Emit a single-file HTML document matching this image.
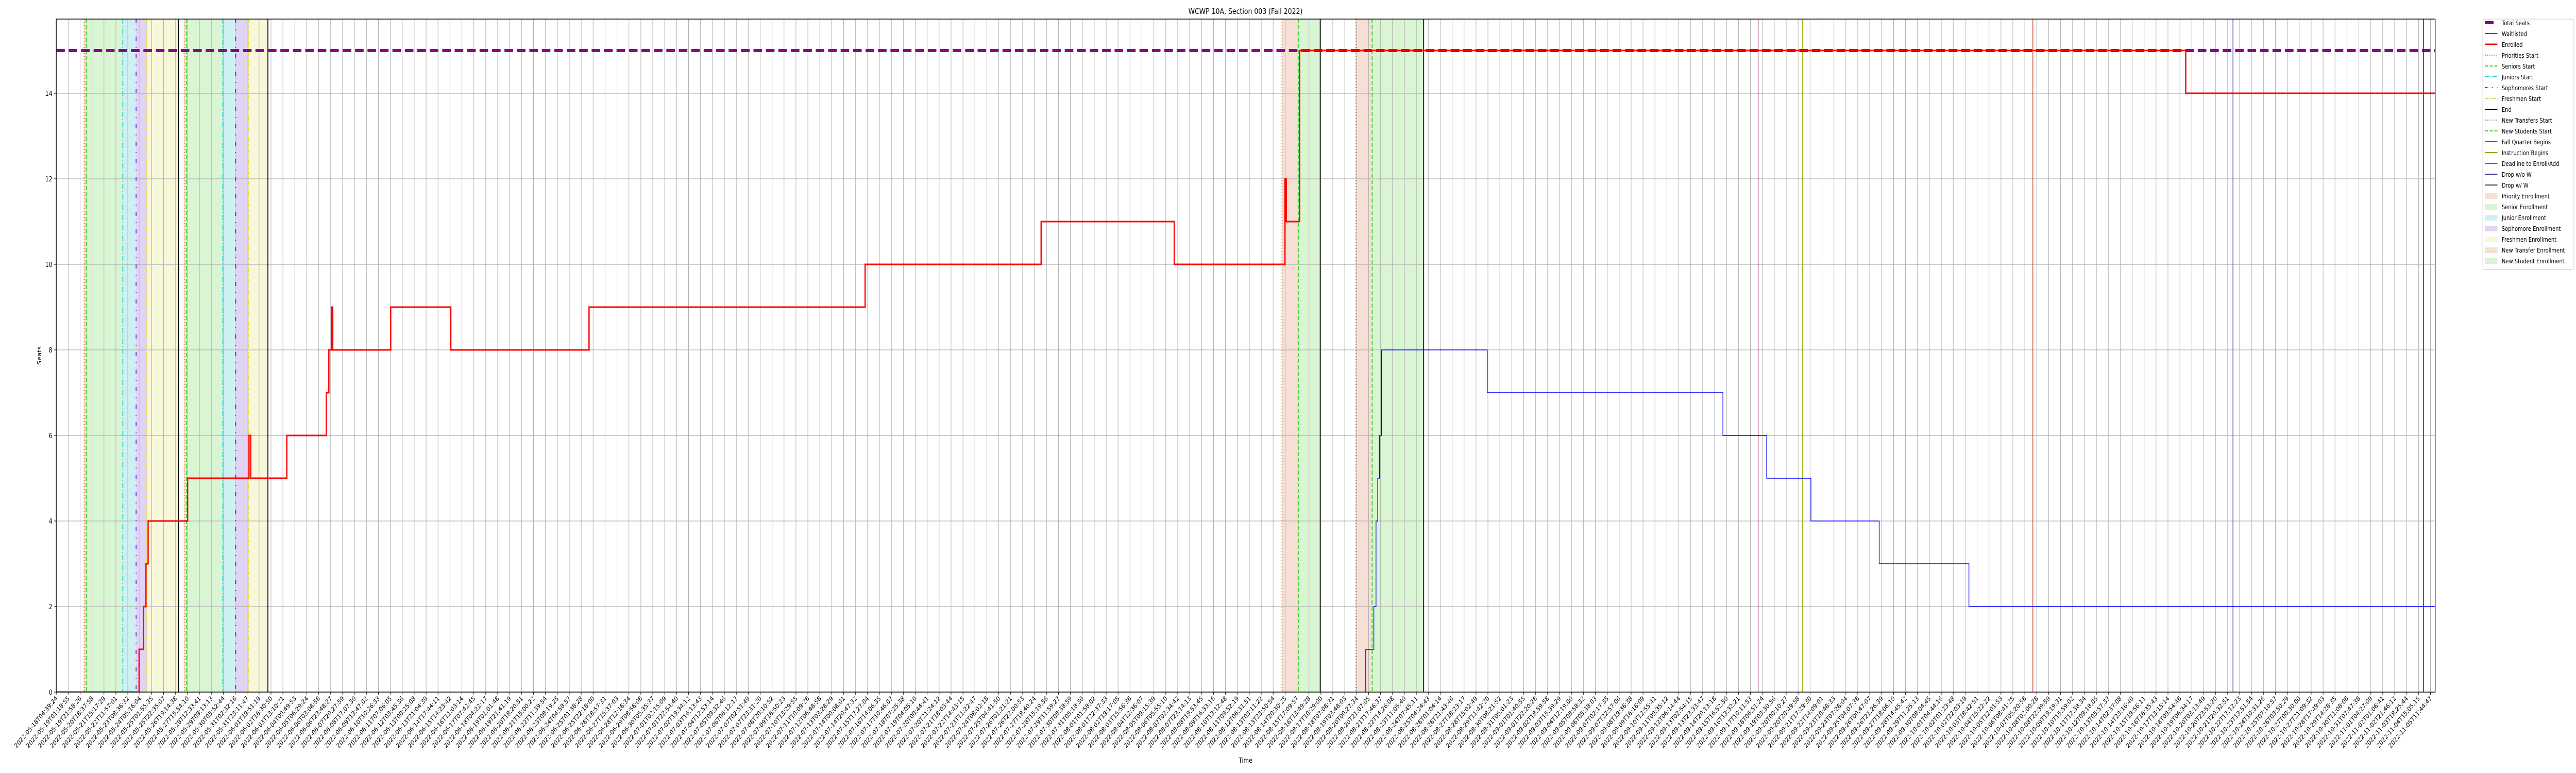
<!DOCTYPE html>
<html><head><meta charset="utf-8"><style>
html,body{margin:0;padding:0;background:#fff;width:100%;height:100%;overflow:hidden;}
svg{display:block;font-family:"DejaVu Sans","Liberation Sans",sans-serif;width:100vw;height:100vh;}
</style></head><body>
<svg id="s" viewBox="0 0 6000 1500" preserveAspectRatio="none" xmlns="http://www.w3.org/2000/svg">
<rect width="6000" height="1500" fill="#fff"/>
<defs><clipPath id="c"><rect x="131" y="37" width="5541" height="1306"/></clipPath></defs>
<g clip-path="url(#c)">
<rect x="196" y="37" width="5" height="1306" fill="#f6dfd4"/>
<rect x="201" y="37" width="85" height="1306" fill="#daf5d3"/>
<rect x="286" y="37" width="31" height="1306" fill="#cff0f2"/>
<rect x="317" y="37" width="25" height="1306" fill="#e0d3f4"/>
<rect x="342" y="37" width="74" height="1306" fill="#f7f8da"/>
<rect x="429" y="37" width="5" height="1306" fill="#f6dfd4"/>
<rect x="434" y="37" width="85" height="1306" fill="#daf5d3"/>
<rect x="519" y="37" width="30" height="1306" fill="#cff0f2"/>
<rect x="549" y="37" width="30" height="1306" fill="#e0d3f4"/>
<rect x="579" y="37" width="45" height="1306" fill="#f7f8da"/>
<rect x="2986" y="37" width="38" height="1306" fill="#f6dfd4"/>
<rect x="3024" y="37" width="51" height="1306" fill="#daf5d3"/>
<rect x="3158" y="37" width="38" height="1306" fill="#f6dfd4"/>
<rect x="3196" y="37" width="120" height="1306" fill="#daf5d3"/>
<g id="grid" stroke="#b0b0b0" stroke-width="1.2"></g>
<g stroke-width="2" fill="none">
<line x1="196" y1="37" x2="196" y2="1343" stroke="#ee6633" stroke-dasharray="2,4"/>
<line x1="201" y1="37" x2="201" y2="1343" stroke="#33cc11" stroke-dasharray="8,4"/>
<line x1="286" y1="37" x2="286" y2="1343" stroke="#11ccd6" stroke-dasharray="10,4,2,4"/>
<line x1="317" y1="37" x2="317" y2="1343" stroke="#6622dd" stroke-dasharray="8,12,2,12"/>
<line x1="342" y1="37" x2="342" y2="1343" stroke="#e4e020" stroke-dasharray="8,3,2,3,2,3"/>
<line x1="416" y1="37" x2="416" y2="1343" stroke="#000"/>
<line x1="429" y1="37" x2="429" y2="1343" stroke="#ee6633" stroke-dasharray="2,4"/>
<line x1="434" y1="37" x2="434" y2="1343" stroke="#33cc11" stroke-dasharray="8,4"/>
<line x1="519" y1="37" x2="519" y2="1343" stroke="#11ccd6" stroke-dasharray="10,4,2,4"/>
<line x1="549" y1="37" x2="549" y2="1343" stroke="#6622dd" stroke-dasharray="8,12,2,12"/>
<line x1="579" y1="37" x2="579" y2="1343" stroke="#e4e020" stroke-dasharray="8,3,2,3,2,3"/>
<line x1="624" y1="37" x2="624" y2="1343" stroke="#000"/>
<line x1="2986" y1="37" x2="2986" y2="1343" stroke="#ee6633" stroke-dasharray="2,4"/>
<line x1="3024" y1="37" x2="3024" y2="1343" stroke="#33cc11" stroke-dasharray="8,4"/>
<line x1="3075" y1="37" x2="3075" y2="1343" stroke="#000"/>
<line x1="3158" y1="37" x2="3158" y2="1343" stroke="#ee6633" stroke-dasharray="2,4"/>
<line x1="3196" y1="37" x2="3196" y2="1343" stroke="#33cc11" stroke-dasharray="8,4"/>
<line x1="3316" y1="37" x2="3316" y2="1343" stroke="#000"/>
<line x1="4095" y1="37" x2="4095" y2="1343" stroke="#9b1b6e" stroke-width="1.5"/>
<line x1="4198" y1="37" x2="4198" y2="1343" stroke="#9ab000" stroke-width="1.5"/>
<line x1="4735" y1="37" x2="4735" y2="1343" stroke="#cc3311" stroke-width="1.5"/>
<line x1="5201" y1="37" x2="5201" y2="1343" stroke="#333399" stroke-width="1.5"/>
<line x1="5645" y1="37" x2="5645" y2="1343" stroke="#2f3f5f" stroke-width="2"/>
</g>
<line x1="131" y1="98" x2="5672" y2="98" stroke="#800080" stroke-width="6" stroke-dasharray="20,9" opacity="0.95"/>
<path d="M131 1343 H3181 V1260 H3200 V1177 H3205 V1011 H3209 V928 H3213 V845 H3218 V679 H3464 V762 H4013 V845 H4115 V928 H4218 V1011 H4377 V1094 H4586 V1177 H5672" fill="none" stroke="#0000ff" stroke-width="1.6"/>
<path d="M131 1343 H324 V1260 H334 V1177 H340 V1094 H345 V1011 H437 V928 H580 V845 H584 V928 H668 V845 H760 V762 H766 V679 H772 V596 H775 V679 H910 V596 H1050 V679 H1372 V596 H2015 V513 H2425 V430 H2735 V513 H2993 V347 H2996 V430 H3027 V98 H5091 V181 H5672" fill="none" stroke="#ff0000" stroke-width="3"/>
</g>
<rect x="131" y="37" width="5541" height="1306" fill="none" stroke="#000" stroke-width="1.5"/>
<g font-size="13" text-anchor="end" fill="#000">
<text x="122" y="1348">0</text><text x="122" y="1182">2</text><text x="122" y="1016">4</text><text x="122" y="850">6</text><text x="122" y="684">8</text><text x="122" y="518">10</text><text x="122" y="352">12</text><text x="122" y="186">14</text>
</g>
<g stroke="#000" stroke-width="1">
<line x1="126" y1="1343" x2="131" y2="1343"/><line x1="126" y1="1177" x2="131" y2="1177"/><line x1="126" y1="1011" x2="131" y2="1011"/><line x1="126" y1="845" x2="131" y2="845"/><line x1="126" y1="679" x2="131" y2="679"/><line x1="126" y1="513" x2="131" y2="513"/><line x1="126" y1="347" x2="131" y2="347"/><line x1="126" y1="181" x2="131" y2="181"/>
</g>
<g id="xt" font-size="12.5" fill="#000"></g>
<text x="2901" y="27" font-size="15" text-anchor="middle">WCWP 10A, Section 003 (Fall 2022)</text>
<text x="2901" y="1480" font-size="13" text-anchor="middle">Time</text>
<text x="0" y="0" font-size="13" text-anchor="middle" transform="translate(96,690) rotate(-90)">Seats</text>
<rect x="5783" y="37" width="212" height="486" rx="3" fill="#fff" stroke="#d0d0d0" stroke-width="1.2"/>
<g font-size="12" fill="#000">
<line x1="5788" y1="44" x2="5808" y2="44" stroke="#800080" stroke-width="6"/><text x="5827" y="49">Total Seats</text>
<line x1="5788" y1="65" x2="5817" y2="65" stroke="#0000ff" stroke-width="1.5"/><text x="5827" y="70">Waitlisted</text>
<line x1="5788" y1="86" x2="5817" y2="86" stroke="#ff0000" stroke-width="3"/><text x="5827" y="91">Enrolled</text>
<line x1="5788" y1="107" x2="5817" y2="107" stroke="#ee6633" stroke-width="2" stroke-dasharray="2,3"/><text x="5827" y="112">Priorities Start</text>
<line x1="5788" y1="128" x2="5817" y2="128" stroke="#33cc11" stroke-width="2" stroke-dasharray="7,4"/><text x="5827" y="133">Seniors Start</text>
<line x1="5788" y1="149" x2="5817" y2="149" stroke="#11ccd6" stroke-width="2" stroke-dasharray="10,3,2,3"/><text x="5827" y="154">Juniors Start</text>
<line x1="5788" y1="170" x2="5817" y2="170" stroke="#6622dd" stroke-width="2" stroke-dasharray="6,10,2,10"/><text x="5827" y="175">Sophomores Start</text>
<line x1="5788" y1="191" x2="5817" y2="191" stroke="#e4e020" stroke-width="2" stroke-dasharray="8,2,2,2,2,2"/><text x="5827" y="196">Freshmen Start</text>
<line x1="5788" y1="212" x2="5817" y2="212" stroke="#000" stroke-width="2"/><text x="5827" y="217">End</text>
<line x1="5788" y1="233" x2="5817" y2="233" stroke="#ee6633" stroke-width="2" stroke-dasharray="2,3"/><text x="5827" y="238">New Transfers Start</text>
<line x1="5788" y1="254" x2="5817" y2="254" stroke="#33cc11" stroke-width="2" stroke-dasharray="7,4"/><text x="5827" y="259">New Students Start</text>
<line x1="5788" y1="275" x2="5817" y2="275" stroke="#dd1199" stroke-width="2"/><text x="5827" y="280">Fall Quarter Begins</text>
<line x1="5788" y1="296" x2="5817" y2="296" stroke="#88aa11" stroke-width="2"/><text x="5827" y="301">Instruction Begins</text>
<line x1="5788" y1="317" x2="5817" y2="317" stroke="#cc4411" stroke-width="2"/><text x="5827" y="322">Deadline to Enroll/Add</text>
<line x1="5788" y1="338" x2="5817" y2="338" stroke="#333399" stroke-width="2"/><text x="5827" y="343">Drop w/o W</text>
<line x1="5788" y1="359" x2="5817" y2="359" stroke="#2f3f5f" stroke-width="2"/><text x="5827" y="364">Drop w/ W</text>
<rect x="5788" y="375" width="29" height="11" fill="#f6dfd4"/><text x="5827" y="385">Priority Enrollment</text>
<rect x="5788" y="396" width="29" height="11" fill="#daf5d3"/><text x="5827" y="406">Senior Enrollment</text>
<rect x="5788" y="417" width="29" height="11" fill="#cff0f2"/><text x="5827" y="427">Junior Enrollment</text>
<rect x="5788" y="438" width="29" height="11" fill="#e0d3f4"/><text x="5827" y="448">Sophomore Enrollment</text>
<rect x="5788" y="459" width="29" height="11" fill="#f7f8da"/><text x="5827" y="469">Freshmen Enrollment</text>
<rect x="5788" y="480" width="29" height="11" fill="#f6dfd4"/><text x="5827" y="490">New Transfer Enrollment</text>
<rect x="5788" y="501" width="29" height="11" fill="#daf5d3"/><text x="5827" y="511">New Student Enrollment</text>
</g>
</svg>
<script>
(function(){
var NS="http://www.w3.org/2000/svg";
var grid=document.getElementById("grid"), xt=document.getElementById("xt"), svg=document.getElementById("s");
for(var v=0;v<=14;v+=2){var y=1343-83*v;var l=document.createElementNS(NS,"line");l.setAttribute("x1",131);l.setAttribute("x2",5672);l.setAttribute("y1",y);l.setAttribute("y2",y);grid.appendChild(l);}
var t0=Date.UTC(2022,4,18,4,39,24), t1=Date.UTC(2022,10,5,11,44,47);
var N=200, x0=131, dx=(5661-131)/199;
function p(n){return (n<10?"0":"")+n;}
for(var i=0;i<N;i++){
 var x=x0+dx*i;
 var l=document.createElementNS(NS,"line");l.setAttribute("x1",x);l.setAttribute("x2",x);l.setAttribute("y1",37);l.setAttribute("y2",1343);grid.appendChild(l);
 var tk=document.createElementNS(NS,"line");tk.setAttribute("x1",x);tk.setAttribute("x2",x);tk.setAttribute("y1",1343);tk.setAttribute("y2",1348);tk.setAttribute("stroke","#000");svg.appendChild(tk);
 var d=new Date(t0+(t1-t0)*i/(N-1));
 var s=d.getUTCFullYear()+"-"+p(d.getUTCMonth()+1)+"-"+p(d.getUTCDate())+"T"+p(d.getUTCHours())+":"+p(d.getUTCMinutes())+":"+p(d.getUTCSeconds());
 var t=document.createElementNS(NS,"text");t.setAttribute("text-anchor","end");
 t.setAttribute("transform","translate("+(x+4)+",1356) rotate(-45)");t.textContent=s;xt.appendChild(t);
}
})();
</script>
</body></html>
